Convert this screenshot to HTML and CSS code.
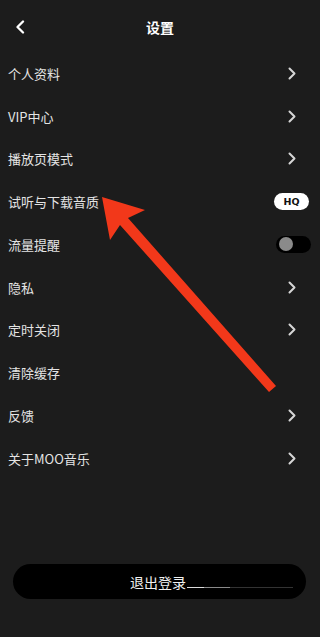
FILE: index.html
```html
<!DOCTYPE html>
<html lang="zh">
<head>
<meta charset="utf-8">
<link rel="stylesheet" href="styles.css">
</head>
<body>
<div class="page">
  <header class="header">
    <svg class="back" width="10" height="14" viewBox="0 0 10 14"><path d="M8 1.5 L2.5 7 L8 12.5" fill="none" stroke="#fff" stroke-width="2.3" stroke-linecap="round" stroke-linejoin="round"/></svg>
    <div class="title">设置</div>
  </header>
  <ul class="list">
    <li class="row"><span>个人资料</span><svg class="chev" width="8" height="13" viewBox="0 0 8 13"><path d="M1.5 1.5 L6.5 6.5 L1.5 11.5" fill="none" stroke="#d6d6d6" stroke-width="2" stroke-linecap="round" stroke-linejoin="round"/></svg></li>
    <li class="row"><span>VIP中心</span><svg class="chev" width="8" height="13" viewBox="0 0 8 13"><path d="M1.5 1.5 L6.5 6.5 L1.5 11.5" fill="none" stroke="#d6d6d6" stroke-width="2" stroke-linecap="round" stroke-linejoin="round"/></svg></li>
    <li class="row"><span>播放页模式</span><svg class="chev" width="8" height="13" viewBox="0 0 8 13"><path d="M1.5 1.5 L6.5 6.5 L1.5 11.5" fill="none" stroke="#d6d6d6" stroke-width="2" stroke-linecap="round" stroke-linejoin="round"/></svg></li>
    <li class="row"><span>试听与下载音质</span><span class="hq">HQ</span></li>
    <li class="row"><span>流量提醒</span><span class="toggle"><span class="knob"></span></span></li>
    <li class="row"><span>隐私</span><svg class="chev" width="8" height="13" viewBox="0 0 8 13"><path d="M1.5 1.5 L6.5 6.5 L1.5 11.5" fill="none" stroke="#d6d6d6" stroke-width="2" stroke-linecap="round" stroke-linejoin="round"/></svg></li>
    <li class="row"><span>定时关闭</span><svg class="chev" width="8" height="13" viewBox="0 0 8 13"><path d="M1.5 1.5 L6.5 6.5 L1.5 11.5" fill="none" stroke="#d6d6d6" stroke-width="2" stroke-linecap="round" stroke-linejoin="round"/></svg></li>
    <li class="row"><span>清除缓存</span></li>
    <li class="row"><span>反馈</span><svg class="chev" width="8" height="13" viewBox="0 0 8 13"><path d="M1.5 1.5 L6.5 6.5 L1.5 11.5" fill="none" stroke="#d6d6d6" stroke-width="2" stroke-linecap="round" stroke-linejoin="round"/></svg></li>
    <li class="row"><span>关于MOO音乐</span><svg class="chev" width="8" height="13" viewBox="0 0 8 13"><path d="M1.5 1.5 L6.5 6.5 L1.5 11.5" fill="none" stroke="#d6d6d6" stroke-width="2" stroke-linecap="round" stroke-linejoin="round"/></svg></li>
  </ul>
  <div class="logout">退出登录</div>
  <svg class="arrow" width="320" height="637" viewBox="0 0 320 637"><polygon points="102,197 145,210 128,218 276,386 269,392 120,225 110,240" fill="#f2381a"/></svg>
</div>
</body>
</html>
```
FILE: styles.css
```css
* { box-sizing: border-box; }
html, body { margin: 0; padding: 0; background: #1c1c1c; }
.page {
  position: relative;
  width: 320px;
  height: 637px;
  display: flex;
  flex-direction: column;
  font-family: "Noto Sans CJK SC", "Noto Sans", sans-serif;
  color: #e4e4e4;
  overflow: hidden;
}
.header {
  position: relative;
  height: 52px;
  display: flex;
  align-items: center;
  justify-content: center;
  flex-shrink: 0;
}
.back {
  position: absolute;
  left: 15px;
  top: 20px;
}
.title {
  font-size: 14px;
  font-weight: 700;
  color: #fff;
  margin-top: 2px;
}
.list {
  list-style: none;
  margin: 0;
  padding: 0;
}
.row {
  height: 42.75px;
  display: flex;
  align-items: center;
  justify-content: space-between;
  padding: 0 11px 0 8px;
  font-size: 13px;
  font-weight: 400;
}
.chev { margin-right: 13px; }
.hq {
  width: 35px;
  height: 17px;
  border-radius: 9px;
  background: #fff;
  color: #111;
  font-family: "DejaVu Sans", sans-serif;
  font-weight: 700;
  font-size: 9.5px;
  display: flex;
  align-items: center;
  justify-content: center;
}
.toggle {
  width: 35px;
  height: 17px;
  border-radius: 9px;
  background: #000;
  display: flex;
  align-items: center;
  padding-left: 3px;
  margin-right: -2px;
}
.knob {
  width: 14px;
  height: 14px;
  border-radius: 50%;
  background: #8a8a8a;
}
.logout {
  position: relative;
  margin: auto 14px 38px 13px;
  height: 35px;
  border-radius: 18px;
  background: #000;
  color: #f0f0f0;
  font-size: 14px;
  font-weight: 400;
  display: flex;
  align-items: center;
  justify-content: center;
  padding-right: 3px;
}
.logout::after {
  content: "";
  position: absolute;
  left: 174px;
  top: 23px;
  width: 106px;
  height: 1px;
  background: linear-gradient(to right, #dcdcdc 0 17px, #8a8a8a 17px 43px, #333 43px 106px);
}
.arrow {
  position: absolute;
  left: 0;
  top: 0;
  pointer-events: none;
}
```
